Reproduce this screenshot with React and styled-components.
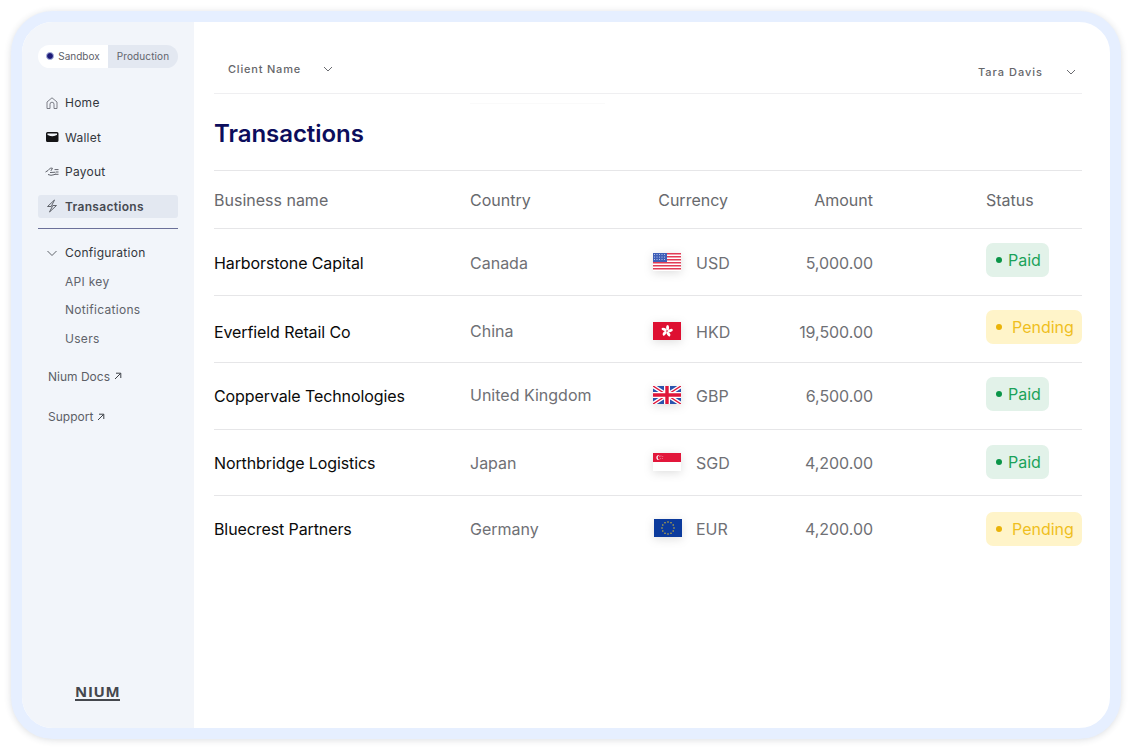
import React from 'react';
import styled, { createGlobalStyle } from 'styled-components';

const GlobalStyle = createGlobalStyle`
  html, body {
    margin: 0;
    padding: 0;
    background: #fff;
    font-family: Inter, "Liberation Sans", sans-serif;
    overflow: hidden;
  }
  * { box-sizing: border-box; }
`;

const Page = styled.div`
  width: 1132px;
  height: 751px;
  padding: 11px 11px 12px 11px;
`;

const Frame = styled.div`
  display: flex;
  height: 100%;
  border: 11px solid #e6efff;
  border-radius: 42px;
  background: #fff;
  overflow: hidden;
  box-shadow: 0 1px 7px rgba(40, 50, 70, 0.16);
`;

const Sidebar = styled.aside`
  display: flex;
  flex-direction: column;
  flex: 0 0 172px;
  padding: 23px 16px 27px;
  background: #f2f5fa;
`;

const EnvSwitch = styled.div`
  display: flex;
  height: 23px;
  margin-bottom: 23px;
  border-radius: 12px;
  overflow: hidden;
`;

const EnvOption = styled.div`
  display: flex;
  align-items: center;
  justify-content: center;
  gap: 4px;
  flex: ${({ $active }) => ($active ? '0 0 70px' : '1')};
  padding-bottom: 1px;
  font-size: 10px;
  letter-spacing: ${({ $active }) => ($active ? '0' : '0.12px')};
  color: ${({ $active }) => ($active ? '#5d6068' : '#61646c')};
  background: ${({ $active }) => ($active ? '#fff' : '#e3e8f1')};
`;

const EnvDot = styled.span`
  width: 8px;
  height: 8px;
  border-radius: 50%;
  background: #1d1a78;
  border: 1px solid #a9b4dc;
`;

const NavItem = styled.div`
  display: flex;
  align-items: center;
  gap: 6px;
  height: 23px;
  margin-bottom: 11.6px;
  padding-left: 7px;
  border-radius: 3px;
  font-size: 12px;
  letter-spacing: ${({ $active }) => ($active ? '0.3px' : '0.25px')};
  font-weight: ${({ $active }) => ($active ? 600 : 400)};
  color: ${({ $active }) => ($active ? '#474a52' : '#34373d')};
  background: ${({ $active }) => ($active ? '#e3e8f1' : 'transparent')};
`;

const NavIcon = styled.svg`
  width: 14px;
  height: 14px;
  flex: none;
`;

const ArrowIcon = styled.svg`
  width: 8px;
  height: 8px;
  flex: none;
`;

const NavRule = styled.div`
  height: 1px;
  margin: -1px 0 12px;
  background: #6b7099;
`;

const SubGroup = styled.div`
  display: flex;
  flex-direction: column;
  gap: 13.5px;
  padding-left: 27px;
  margin: -2px 0 23px;
`;

const SubItem = styled.div`
  font-size: 12px;
  line-height: 15px;
  letter-spacing: 0.3px;
  color: #60636a;
`;

const ExternalLink = styled.div`
  display: flex;
  align-items: center;
  gap: 4px;
  height: 15px;
  margin: 0 0 25.5px 10px;
  font-size: 12px;
  color: #5c5f66;
`;

const Logo = styled.div`
  align-self: flex-start;
  margin: auto 0 0 37px;
  padding-bottom: 1px;
  border-bottom: 2px solid #44474d;
  font-family: "Open Sans", sans-serif;
  font-size: 15px;
  line-height: 14px;
  font-weight: 700;
  letter-spacing: 0.7px;
  color: #44474d;
`;

const Main = styled.main`
  flex: 1;
  display: flex;
  flex-direction: column;
  padding: 0 28px 0 20px;
`;

const TopBar = styled.header`
  display: flex;
  justify-content: space-between;
  flex: none;
  height: 72px;
  border-bottom: 1px solid #efeff1;
`;

const Picker = styled.div`
  display: flex;
  align-items: center;
  height: 20px;
  margin-top: ${({ $user }) => ($user ? '40px' : '37px')};
  padding-left: ${({ $user }) => ($user ? '0' : '14px')};
  padding-right: ${({ $user }) => ($user ? '6px' : '0')};
  gap: ${({ $user }) => ($user ? '23px' : '22px')};
  font-size: 11px;
  font-weight: 500;
  letter-spacing: ${({ $user }) => ($user ? '1px' : '0.8px')};
  color: #65666a;
`;

const Chevron = styled.svg`
  width: 10px;
  height: 6px;
  flex: none;
`;

const Hairline = styled.div`
  flex: none;
  width: 135px;
  height: 1px;
  margin: 9px 0 0 256px;
  background: #fafafa;
`;

const Title = styled.h1`
  margin: 0;
  padding: 14px 0 20px;
  font-size: 24px;
  line-height: 32px;
  font-weight: 600;
  letter-spacing: -0.05px;
  color: #0c0d5c;
  border-bottom: 1px solid #e6e6e8;
`;

const GridRow = styled.div`
  display: grid;
  grid-template-columns: 256px 170px 88px 145px 113px 96px;
  align-items: center;
  flex: none;
  height: ${({ $h }) => $h}px;
  border-bottom: ${({ $last }) => ($last ? '0' : '1px solid #e6e6e8')};
  font-size: 16px;
`;

const Head = styled.div`
  font-size: 16px;
  color: #68696d;
  text-align: ${({ $right }) => ($right ? 'right' : 'left')};
`;

// a top margin on a centred cell moves it by half its value
const Name = styled.div`
  letter-spacing: -0.1px;
  color: #0a0a0a;
  margin-top: ${({ $nudge }) => $nudge || 0}px;
`;

const Country = styled.div`
  color: #6f7075;
  margin-top: ${({ $nudge }) => $nudge || 0}px;
`;

const CurrencyCell = styled.div`
  display: flex;
  align-items: center;
  justify-content: flex-end;
  gap: 15px;
  color: #6f7075;
  margin-top: ${({ $nudge }) => $nudge || 0}px;
`;

const Code = styled.span`
  width: 33px;
  margin-right: -1px;
`;

const Flag = styled.svg`
  width: 28px;
  height: 18px;
  flex: none;
  margin-top: -2px;
  filter: drop-shadow(0 2px 5px rgba(0, 0, 0, 0.13));
`;

const EuFlagSvg = styled(Flag)`
  margin-left: 1px;
  margin-right: -1px;
`;

const Amount = styled.div`
  text-align: right;
  letter-spacing: -0.05px;
  color: #6f7075;
  margin-top: ${({ $nudge }) => $nudge || 0}px;
`;

const Status = styled.div`
  display: inline-flex;
  align-items: center;
  justify-self: start;
  height: 34px;
  margin-top: ${({ $nudge }) => $nudge || 0}px;
  padding: 0 ${({ $paid }) => ($paid ? '11px' : '0')} 0 10px;
  width: ${({ $paid }) => ($paid ? '63px' : '96px')};
  gap: ${({ $paid }) => ($paid ? '6px' : '10px')};
  border-radius: 7px;
  color: ${({ $paid }) => ($paid ? '#1ba25a' : '#efbf1e')};
  background: ${({ $paid }) => ($paid ? '#e2f2e9' : '#fff4c9')};
`;

const StatusDot = styled.span`
  width: 6px;
  height: 6px;
  flex: none;
  border-radius: 50%;
  background: ${({ $paid }) => ($paid ? '#0a9548' : '#eab308')};
`;

const ChevronIcon = () => (
  <Chevron viewBox="0 0 10 6" fill="none" stroke="#6a6b70" strokeWidth="1">
    <path d="M1 1l4 4 4-4" />
  </Chevron>
);

const ExternalArrow = () => (
  <ArrowIcon viewBox="0 0 8 8" fill="none" stroke="#3d4046" strokeWidth="1">
    <path d="M1 7l5.5-5.5M2 1.2h4.8V6" />
  </ArrowIcon>
);

const UsFlag = () => (
  <Flag viewBox="0 0 28 18">
    <rect width="28" height="18" fill="#fff" />
    {[0, 3, 6, 9, 12, 15].map((y) => (
      <rect key={y} y={y} width="28" height="1.5" fill="#e23b55" />
    ))}
    <rect width="14" height="9" fill="#3f5fb8" />
    {[1.5, 4, 6.5].map((y) =>
      [1.5, 4, 6.5, 9, 11.5].map((x) => (
        <circle key={`${x}-${y}`} cx={x} cy={y} r="0.5" fill="#dfe6f7" />
      ))
    )}
  </Flag>
);

const HkFlag = () => (
  <Flag viewBox="0 0 28 18">
    <rect width="28" height="18" fill="#de0f31" />
    {[0, 72, 144, 216, 288].map((a) => (
      <ellipse key={a} cx="14.6" cy="5.8" rx="1.5" ry="2.7" fill="#fff" transform={`rotate(${a} 14 9)`} />
    ))}
  </Flag>
);

const UkFlag = () => (
  <Flag viewBox="0 0 28 18">
    <rect width="28" height="18" fill="#2a53ad" />
    <path d="M0 0l28 18M28 0L0 18" stroke="#fff" strokeWidth="4" />
    <path d="M0 0l28 18M28 0L0 18" stroke="#e0163a" strokeWidth="1.4" />
    <path d="M14 0v18M0 9h28" stroke="#fff" strokeWidth="6" />
    <path d="M14 0v18M0 9h28" stroke="#e0163a" strokeWidth="3.4" />
  </Flag>
);

const SgFlag = () => (
  <Flag viewBox="0 0 28 18">
    <rect width="28" height="18" fill="#fff" />
    <rect width="28" height="9" fill="#e2173b" />
    <circle cx="6" cy="4.5" r="2.6" fill="#fff" />
    <circle cx="7.2" cy="4.5" r="2.5" fill="#e2173b" />
    {[[8, 3], [9.8, 3.6], [9.2, 5.6], [7.2, 5.6], [6.8, 3.8]].map(([x, y]) => (
      <circle key={`${x}-${y}`} cx={x} cy={y} r="0.45" fill="#fff" />
    ))}
  </Flag>
);

const EuFlag = () => (
  <EuFlagSvg viewBox="0 0 28 18">
    <rect width="28" height="18" fill="#0b3a9c" />
    {Array.from({ length: 12 }, (_, i) => {
      const a = (i * Math.PI) / 6;
      return <circle key={i} cx={14 + 6 * Math.sin(a)} cy={9 - 6 * Math.cos(a)} r="0.8" fill="#c9b23a" />;
    })}
  </EuFlagSvg>
);

const flags = { USD: UsFlag, HKD: HkFlag, GBP: UkFlag, SGD: SgFlag, EUR: EuFlag };

const rows = [
  { name: 'Harborstone Capital', country: 'Canada', code: 'USD', amount: '5,000.00', paid: true, h: 67, nudge: 2, countryNudge: 2, badge: -4 },
  { name: 'Everfield Retail Co', country: 'China', code: 'HKD', amount: '19,500.00', paid: false, h: 67, nudge: 5, countryNudge: 4, badge: -4 },
  { name: 'Coppervale Technologies', country: 'United Kingdom', code: 'GBP', amount: '6,500.00', paid: true, h: 67, nudge: 0, countryNudge: -2, badge: -4 },
  { name: 'Northbridge Logistics', country: 'Japan', code: 'SGD', amount: '4,200.00', paid: true, h: 66, nudge: 0, countryNudge: 0, badge: -2 },
  { name: 'Bluecrest Partners', country: 'Germany', code: 'EUR', amount: '4,200.00', paid: false, h: 67, nudge: -2, countryNudge: -2, badge: -2, last: true },
];

const App = () => (
  <Page>
    <GlobalStyle />
    <Frame>
      <Sidebar>
        <EnvSwitch>
          <EnvOption $active>
            <EnvDot />
            Sandbox
          </EnvOption>
          <EnvOption>Production</EnvOption>
        </EnvSwitch>

        <NavItem>
          <NavIcon viewBox="0 0 14 14" fill="none" stroke="#6f727a" strokeWidth="0.9">
            <path d="M2 12.5V6l5-4.2L12 6v6.5H9V8.2a2 2 0 0 0-4 0v4.3z" />
          </NavIcon>
          Home
        </NavItem>
        <NavItem>
          <NavIcon viewBox="0 0 14 14">
            <path d="M1 3.5A1.5 1.5 0 0 1 2.5 2h9.5A1.5 1.5 0 0 1 13.5 3.5v7a1.5 1.5 0 0 1-1.5 1.5H2.5A1.5 1.5 0 0 1 1 10.5z" fill="#141416" />
            <path d="M2.5 3.4h9.5v1.7c-1.6.2-2 1.2-4.7 1.2S4 5.3 2.5 5.1z" fill="#f2f5fa" />
          </NavIcon>
          Wallet
        </NavItem>
        <NavItem>
          <NavIcon viewBox="0 0 14 14" fill="none" stroke="#5f626a" strokeWidth="1">
            <path d="M0.5 7l2.5-1.5 2.5-2.5 2 .3-1.6 2.6M3 9.5l3 .8 3-.6 2-.7M5 7.5l5.5-.3M9.5 4.6h4M11 7h2.5M10.5 9.3h3" />
          </NavIcon>
          Payout
        </NavItem>
        <NavItem $active>
          <NavIcon viewBox="0 0 14 14" fill="none" stroke="#5f626a" strokeWidth="1">
            <path d="M9.5 1L2.5 7.5h3.7M11.5 6.5H7.8M11.5 6.5L4.5 13M9.5 1L6.2 7.5M7.8 6.5L4.5 13" />
          </NavIcon>
          Transactions
        </NavItem>
        <NavRule />

        <NavItem>
          <NavIcon viewBox="0 0 14 14" fill="none" stroke="#5f6269" strokeWidth="1">
            <path d="M2.5 5l4.5 4.5L11.5 5" />
          </NavIcon>
          Configuration
        </NavItem>
        <SubGroup>
          <SubItem>API key</SubItem>
          <SubItem>Notifications</SubItem>
          <SubItem>Users</SubItem>
        </SubGroup>

        <ExternalLink>
          Nium Docs
          <ExternalArrow />
        </ExternalLink>
        <ExternalLink>
          Support
          <ExternalArrow />
        </ExternalLink>

        <Logo>NIUM</Logo>
      </Sidebar>

      <Main>
        <TopBar>
          <Picker>
            Client Name
            <ChevronIcon />
          </Picker>
          <Picker $user>
            Tara Davis
            <ChevronIcon />
          </Picker>
        </TopBar>
        <Hairline />

        <Title>Transactions</Title>

        <GridRow $h={58}>
          <Head>Business name</Head>
          <Head>Country</Head>
          <Head $right>Currency</Head>
          <Head $right>Amount</Head>
          <span />
          <Head>Status</Head>
        </GridRow>

        {rows.map((row) => {
          const FlagIcon = flags[row.code];
          return (
            <GridRow key={row.name} $h={row.h} $last={row.last}>
              <Name $nudge={row.nudge}>{row.name}</Name>
              <Country $nudge={row.countryNudge}>{row.country}</Country>
              <CurrencyCell $nudge={row.nudge}>
                <FlagIcon />
                <Code>{row.code}</Code>
              </CurrencyCell>
              <Amount $nudge={row.nudge}>{row.amount}</Amount>
              <span />
              <Status $paid={row.paid} $nudge={row.badge}>
                <StatusDot $paid={row.paid} />
                {row.paid ? 'Paid' : 'Pending'}
              </Status>
            </GridRow>
          );
        })}
      </Main>
    </Frame>
  </Page>
);

export default App;
